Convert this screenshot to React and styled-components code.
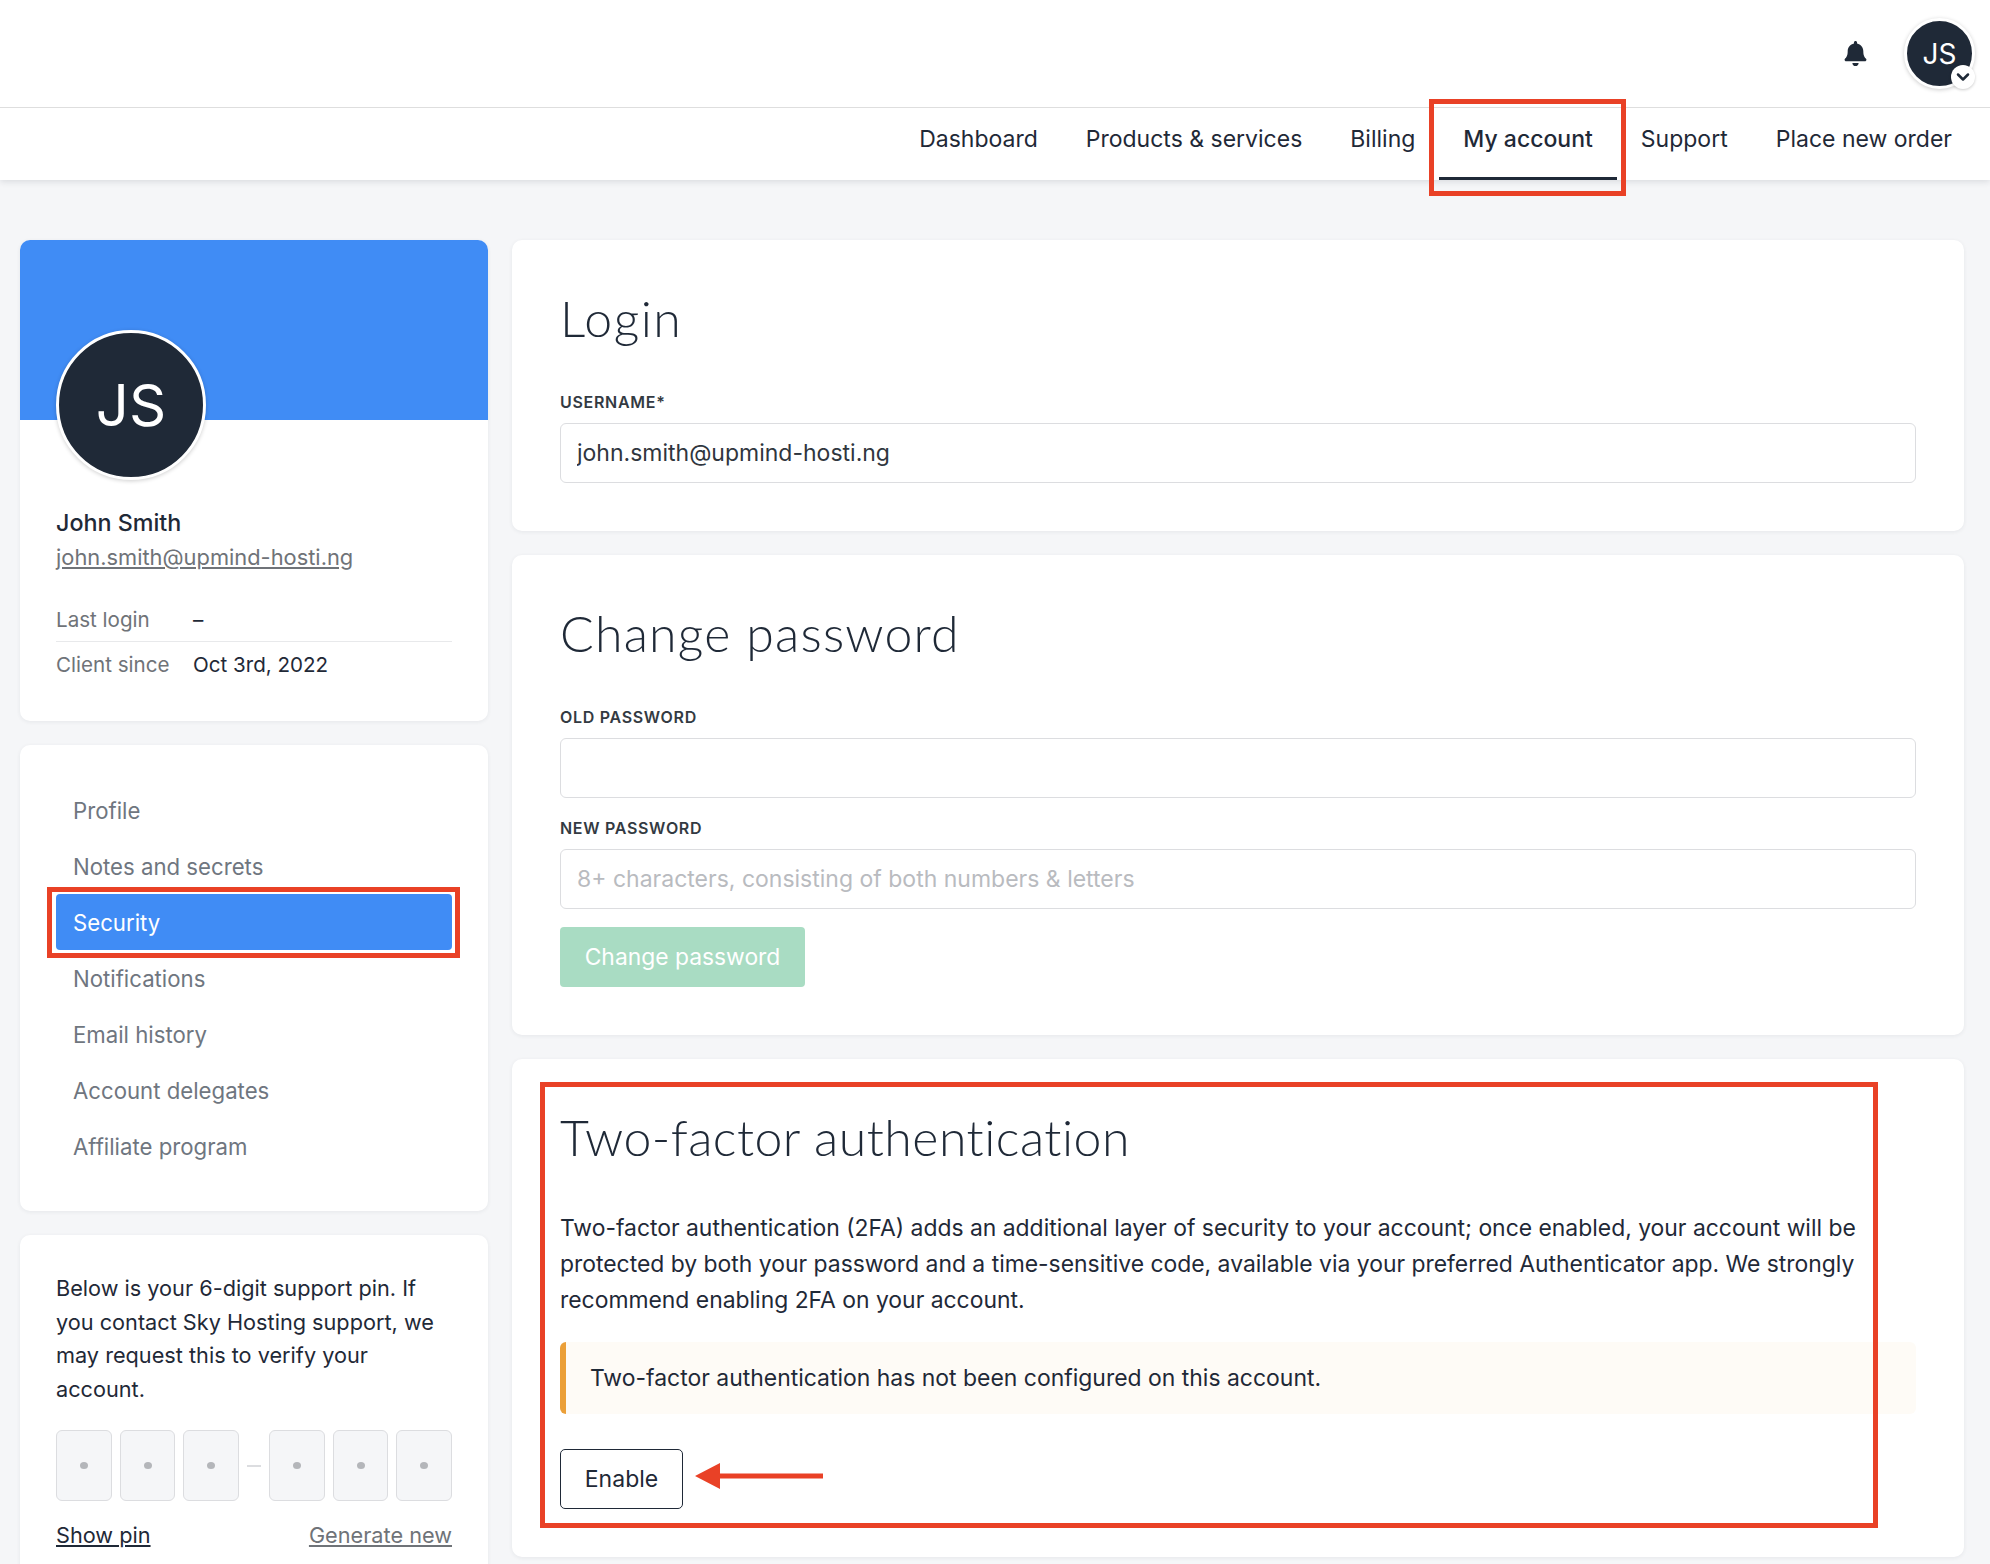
import React from 'react';
import styled, { createGlobalStyle } from 'styled-components';
import { FaBell } from 'react-icons/fa';
import { ChevronDown } from 'lucide-react';

const GlobalStyle = createGlobalStyle`
    * {
        box-sizing: border-box;
    }
    html, body {
        margin: 0;
        padding: 0;
        background: #f5f6f8;
    }
    body {
        font-family: Inter, "Liberation Sans", sans-serif;
        color: #1f2937;
        -webkit-font-smoothing: antialiased;
    }
`;

const Page = styled.div`
    width: 1990px;
    height: 1564px;
    overflow: hidden;
    background: #f5f6f8;
`;

const Header = styled.header`
    background: #fff;
    box-shadow: 0 2px 6px rgba(31, 41, 55, 0.12);
`;

const TopBar = styled.div`
    height: 108px;
    display: flex;
    align-items: center;
    justify-content: flex-end;
    padding-right: 15px;
    border-bottom: 1px solid #dedede;
`;

const BellWrap = styled.div`
    display: flex;
    margin-right: 36px;
    font-size: 25px;
    color: #1f2937;
`;

const TopAvatar = styled.div`
    position: relative;
    width: 71px;
    height: 71px;
    border-radius: 50%;
    background: #1f2937;
    border: 3px solid #fff;
    box-shadow: 0 1px 4px rgba(0, 0, 0, 0.2);
    color: #fff;
    font-size: 28px;
    display: flex;
    align-items: center;
    justify-content: center;
`;

const Badge = styled.span`
    position: absolute;
    right: -3px;
    bottom: -3px;
    width: 24px;
    height: 24px;
    border-radius: 50%;
    background: #fff;
    box-shadow: 0 1px 3px rgba(0, 0, 0, 0.2);
    display: flex;
    align-items: center;
    justify-content: center;
    color: #1f2937;
`;

const Nav = styled.nav`
    height: 72px;
    display: flex;
    justify-content: flex-end;
    padding-right: 14px;
`;

const NavItem = styled.a`
    position: relative;
    display: flex;
    align-items: center;
    padding: 0 24px 7px;
    font-size: 23px;
    font-weight: ${(p) => (p.$active ? 500 : 400)};
    color: #1f2937;
    border-bottom: 3px solid ${(p) => (p.$active ? '#1f2937' : 'transparent')};
`;

const Callout = styled.span`
    position: absolute;
    border: 5px solid #e94126;
    pointer-events: none;
`;

const NavCallout = styled(Callout)`
    top: -9px;
    left: -10px;
    right: -9px;
    bottom: -19px;
`;

const Content = styled.div`
    display: flex;
    align-items: flex-start;
    gap: 24px;
    padding: 60px 26px 0 20px;
`;

const Sidebar = styled.aside`
    width: 468px;
    flex: none;
    display: flex;
    flex-direction: column;
    gap: 24px;
`;

const Main = styled.main`
    flex: 1;
    min-width: 0;
    display: flex;
    flex-direction: column;
    gap: 24px;
`;

const Card = styled.section`
    position: relative;
    background: #fff;
    border-radius: 10px;
    box-shadow: 0 1px 4px rgba(31, 41, 55, 0.07);
`;

const ProfileBanner = styled.div`
    height: 180px;
    background: #408cf5;
    border-radius: 10px 10px 0 0;
`;

const ProfileBody = styled.div`
    padding: 0 36px 34px;
`;

const BigAvatar = styled.div`
    width: 150px;
    height: 150px;
    margin: -90px 0 26px 0;
    position: relative;
    border-radius: 50%;
    background: #1f2937;
    border: 3px solid #fff;
    box-shadow: 0 1px 4px rgba(0, 0, 0, 0.2);
    color: #fff;
    font-size: 58px;
    display: flex;
    align-items: center;
    justify-content: center;
`;

const Name = styled.div`
    font-size: 23.3px;
    line-height: 34px;
    font-weight: 500;
`;

const EmailLink = styled.a`
    display: block;
    font-size: 21.85px;
    line-height: 34px;
    color: #6f7378;
    text-decoration: underline;
`;

const StatList = styled.div`
    margin-top: 23px;
`;

const StatRow = styled.div`
    height: 45px;
    display: flex;
    align-items: center;
    font-size: 20.6px;
    border-bottom: ${(p) => (p.$divided ? '1px solid #e8e9eb' : 'none')};
`;

const StatLabel = styled.span`
    width: 137px;
    color: #6f7378;
`;

const MenuCard = styled(Card)`
    padding: 37px 36px;
`;

const MenuItem = styled.a`
    position: relative;
    display: flex;
    align-items: center;
    height: 56px;
    padding-left: 17px;
    border-radius: 4px;
    font-size: 22.2px;
    color: ${(p) => (p.$active ? '#fff' : '#6f7680')};
    background: ${(p) => (p.$active ? '#408cf5' : 'transparent')};
`;

const MenuCallout = styled(Callout)`
    top: -7px;
    left: -9px;
    right: -8px;
    bottom: -8px;
`;

const PinCard = styled(Card)`
    padding: 37px 36px 30px;
`;

const PinText = styled.p`
    margin: 0;
    font-size: 21.7px;
    line-height: 33.6px;
`;

const PinRow = styled.div`
    margin-top: 24px;
    display: flex;
    align-items: center;
    gap: 8px;
`;

const PinBox = styled.div`
    flex: 1;
    height: 71px;
    background: #f5f6f8;
    border: 1px solid #dcdde0;
    border-radius: 6px;
    display: flex;
    align-items: center;
    justify-content: center;
`;

const PinDot = styled.span`
    width: 8px;
    height: 7px;
    border-radius: 50%;
    background: #b4b6ba;
`;

const PinDash = styled.span`
    width: 14px;
    height: 2px;
    background: #dcdde0;
`;

const PinLinks = styled.div`
    margin-top: 17px;
    display: flex;
    justify-content: space-between;
    font-size: 21.7px;
    line-height: 34px;
`;

const PinLink = styled.a`
    text-decoration: underline;
    color: ${(p) => (p.$muted ? '#6f7378' : '#1f2937')};
`;

const FormCard = styled(Card)`
    padding: 48px;
`;

const Title = styled.h2`
    margin: 0 0 42px;
    height: 62px;
    font-family: Lato, "Open Sans", sans-serif;
    font-size: 50px;
    line-height: 60px;
    font-weight: 300;
    letter-spacing: ${(p) => p.$tracking}px;
    color: #1f2937;
`;

const Label = styled.label`
    display: block;
    margin-bottom: 11px;
    font-size: 16px;
    line-height: 20px;
    font-weight: 600;
    letter-spacing: 0.7px;
    color: #333a42;
`;

const Input = styled.input`
    display: block;
    width: 100%;
    height: 60px;
    padding: 0 16px;
    border: 1px solid #dcdde0;
    border-radius: 6px;
    outline: none;
    background: #fff;
    font-family: inherit;
    font-size: 23px;
    color: #30363e;
    &::placeholder {
        color: #b9bbbf;
    }
`;

const Field = styled.div`
    margin-bottom: ${(p) => p.$gap || 0}px;
`;

const SubmitButton = styled.button`
    display: block;
    width: 245px;
    height: 60px;
    border: none;
    border-radius: 4px;
    background: #a9dcc3;
    color: #fff;
    font-family: inherit;
    font-size: 22.85px;
`;

const Body = styled.p`
    margin: -1px 0 24px;
    font-size: 22.9px;
    line-height: 36px;
    color: #1f2937;
`;

const Alert = styled.div`
    height: 72px;
    display: flex;
    align-items: center;
    padding-left: 24px;
    border-left: 6px solid #eb9f38;
    border-radius: 6px;
    background: #fefbf6;
    font-size: 22.95px;
    color: #1f2937;
`;

const ActionRow = styled.div`
    margin-top: 35px;
    display: flex;
    align-items: center;
    gap: 12px;
`;

const EnableButton = styled.button`
    width: 123px;
    height: 60px;
    border: 1px solid #1f2937;
    border-radius: 5px;
    background: #fff;
    color: #1f2937;
    font-family: inherit;
    font-size: 23px;
`;

const Arrow = styled.svg`
    display: block;
    margin-top: -6px;
`;

const TwoFactorCallout = styled(Callout)`
    top: 23px;
    left: 28px;
    right: 86px;
    bottom: 29px;
`;

const navItems = ['Dashboard', 'Products & services', 'Billing', 'My account', 'Support', 'Place new order'];
const menuItems = ['Profile', 'Notes and secrets', 'Security', 'Notifications', 'Email history', 'Account delegates', 'Affiliate program'];

const Pin = () => (
    <PinBox>
        <PinDot />
    </PinBox>
);

const App = () => (
    <Page>
        <GlobalStyle />
        <Header>
            <TopBar>
                <BellWrap>
                    <FaBell />
                </BellWrap>
                <TopAvatar>
                    JS
                    <Badge>
                        <ChevronDown size={20} strokeWidth={3} />
                    </Badge>
                </TopAvatar>
            </TopBar>
            <Nav>
                {navItems.map((item) => (
                    <NavItem key={item} $active={item === 'My account'}>
                        {item}
                        {item === 'My account' && <NavCallout />}
                    </NavItem>
                ))}
            </Nav>
        </Header>
        <Content>
            <Sidebar>
                <Card>
                    <ProfileBanner />
                    <ProfileBody>
                        <BigAvatar>JS</BigAvatar>
                        <Name>John Smith</Name>
                        <EmailLink>john.smith@upmind-hosti.ng</EmailLink>
                        <StatList>
                            <StatRow $divided>
                                <StatLabel>Last login</StatLabel>
                                <span>–</span>
                            </StatRow>
                            <StatRow>
                                <StatLabel>Client since</StatLabel>
                                <span>Oct 3rd, 2022</span>
                            </StatRow>
                        </StatList>
                    </ProfileBody>
                </Card>
                <MenuCard>
                    {menuItems.map((item) => (
                        <MenuItem key={item} $active={item === 'Security'}>
                            {item}
                            {item === 'Security' && <MenuCallout />}
                        </MenuItem>
                    ))}
                </MenuCard>
                <PinCard>
                    <PinText>
                        Below is your 6-digit support pin. If you contact Sky Hosting support, we may request this to verify your account.
                    </PinText>
                    <PinRow>
                        <Pin />
                        <Pin />
                        <Pin />
                        <PinDash />
                        <Pin />
                        <Pin />
                        <Pin />
                    </PinRow>
                    <PinLinks>
                        <PinLink>Show pin</PinLink>
                        <PinLink $muted>Generate new</PinLink>
                    </PinLinks>
                </PinCard>
            </Sidebar>
            <Main>
                <FormCard>
                    <Title $tracking={1.5}>Login</Title>
                    <Label>USERNAME*</Label>
                    <Input readOnly value="john.smith@upmind-hosti.ng" />
                </FormCard>
                <FormCard>
                    <Title $tracking={1.2}>Change password</Title>
                    <Field $gap={20}>
                        <Label>OLD PASSWORD</Label>
                        <Input readOnly />
                    </Field>
                    <Field $gap={18}>
                        <Label>NEW PASSWORD</Label>
                        <Input readOnly placeholder="8+ characters, consisting of both numbers & letters" />
                    </Field>
                    <SubmitButton>Change password</SubmitButton>
                </FormCard>
                <FormCard>
                    <Title $tracking={0.5}>Two-factor authentication</Title>
                    <Body>
                        Two-factor authentication (2FA) adds an additional layer of security to your account; once enabled, your account will be protected by both your password and a time-sensitive code, available via your preferred Authenticator app. We strongly recommend enabling 2FA on your account.
                    </Body>
                    <Alert>Two-factor authentication has not been configured on this account.</Alert>
                    <ActionRow>
                        <EnableButton>Enable</EnableButton>
                        <Arrow width="128" height="26" viewBox="0 0 128 26">
                            <path d="M0 13 L25 0 V10.5 H128 V15.5 H25 V26 Z" fill="#e94126" />
                        </Arrow>
                    </ActionRow>
                    <TwoFactorCallout />
                </FormCard>
            </Main>
        </Content>
    </Page>
);

export default App;
